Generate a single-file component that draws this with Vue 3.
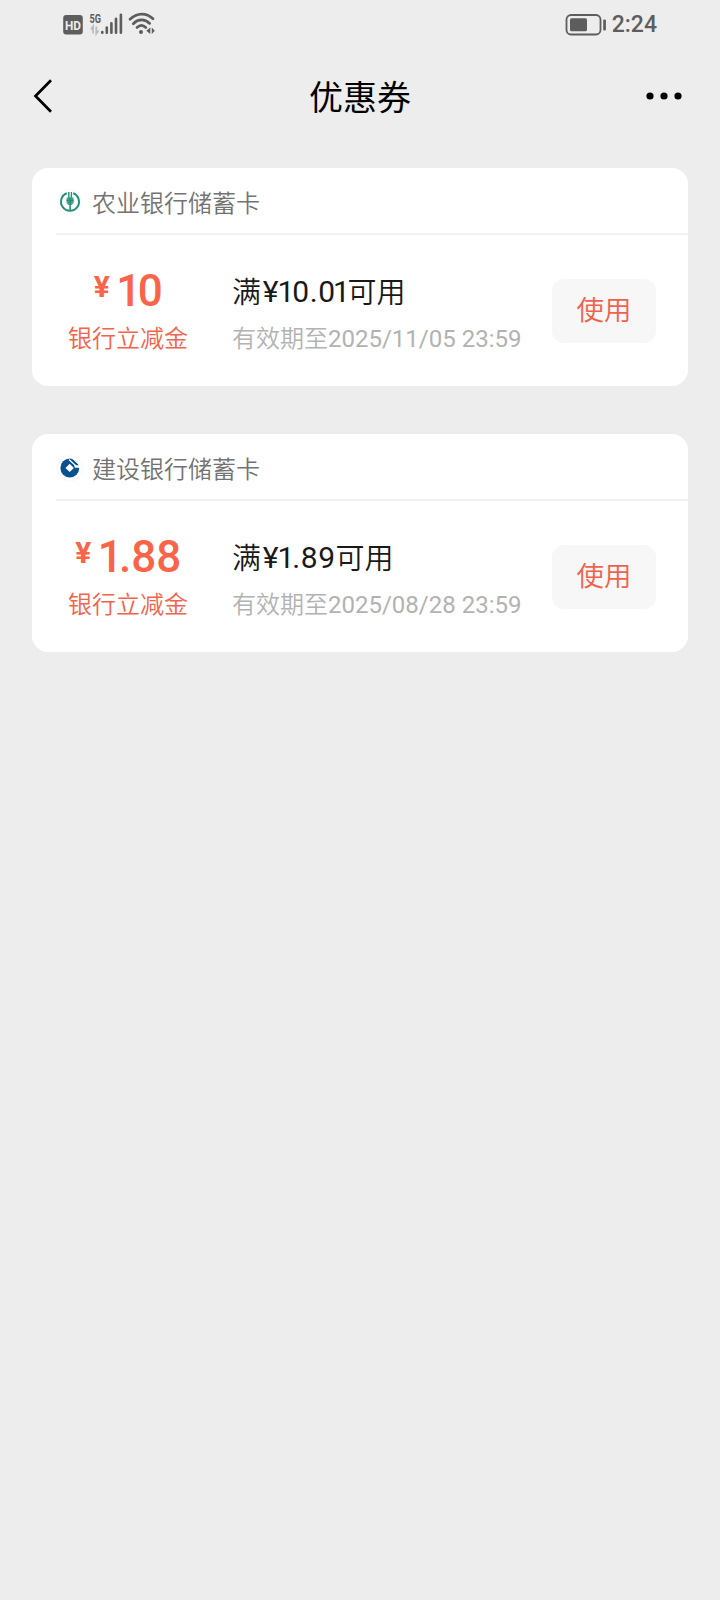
<script setup>
const glyphWidths = { '¥': 19, 1: 12, '.': 8.5 }
const glyphWidth = (ch) => (glyphWidths[ch] ?? 17.5) + 'px'

const coupons = [
  {
    bank: '农业银行储蓄卡',
    logo: 'abc',
    amount: '10',
    pre: '满',
    limit: '¥10.01',
    post: '可用',
    expiry: '2025/11/05 23:59',
  },
  {
    bank: '建设银行储蓄卡',
    logo: 'ccb',
    amount: '1.88',
    pre: '满',
    limit: '¥1.89',
    post: '可用',
    expiry: '2025/08/28 23:59',
  },
]
</script>

<template>
  <div class="page">
    <div class="status">
      <svg class="left-icons" width="96" height="26" viewBox="0 0 96 26">
        <rect x="0.2" y="3" width="19.600" height="19.500" rx="3" fill="#5d5d5d" />
        <text x="2" y="17.500" class="hd" textLength="16" lengthAdjust="spacingAndGlyphs">HD</text>
        <text x="26.500" y="10.500" class="fiveg" textLength="11.500" lengthAdjust="spacingAndGlyphs">5G</text>
        <path d="M30 21.500V14.500L28 17.500M33.300 14.500v7l2.300-3" fill="none" stroke="#bbb" stroke-width="1.800" />
        <g stroke="#5d5d5d" stroke-width="2.600" stroke-linecap="round">
          <path d="M39.300 20v.8M43.800 15.500v5.300M48.400 11.300v9.500M53 6.800v14M57.900 2.800v18" />
        </g>
        <g fill="none" stroke="#5d5d5d" stroke-width="2.700" stroke-linecap="round">
          <path d="M67 7.200C74 .4 83.500 .4 90 6.800" />
          <path d="M70.300 11.700c5-5 11.400-5 16.400-.3" />
          <path d="M74 15.500c2.800-2.700 6-2.700 8.800 0" />
        </g>
        <circle cx="78" cy="20" r="2" fill="#5d5d5d" />
        <path d="M87.300 15.500v6.500l-4-3.200zM88.800 15.500v6.500l3-3.200z" fill="#5d5d5d" />
      </svg>
      <div class="right-icons">
        <svg width="42" height="24" viewBox="0 0 42 24">
          <rect x="1.500" y="2" width="34" height="19.500" rx="4.500" fill="none" stroke="#5d5d5d" stroke-width="1.800" />
          <rect x="5" y="5.200" width="17" height="13" rx="1.500" fill="#5d5d5d" />
          <rect x="38.200" y="6.500" width="2.700" height="11" rx="1" fill="#5d5d5d" />
        </svg>
        <span class="time">2:24</span>
      </div>
    </div>

    <header class="nav">
      <svg width="22" height="36" viewBox="0 0 22 36">
        <path d="M19 2.300L3.500 18 19 33.700" fill="none" stroke="#000" stroke-width="2.700" />
      </svg>
      <h1>优惠券</h1>
      <svg width="38" height="10" viewBox="0 0 38 10">
        <circle cx="5" cy="5" r="3.600" /><circle cx="19" cy="5" r="3.600" /><circle cx="33" cy="5" r="3.600" />
      </svg>
    </header>

    <main>
      <section v-for="c in coupons" :key="c.logo" class="card">
        <div class="bank">
          <svg v-if="c.logo === 'abc'" width="28" height="28" viewBox="0 0 28 28">
            <circle cx="14" cy="14.300" r="12.700" fill="#fff" stroke="#f8f8f8" />
            <path d="M10.800 5.300A9 9 0 1 0 17.200 5.300" fill="none" stroke="#259078" stroke-width="2" />
            <path d="M12.800 4v6M15.400 4v6" stroke="#259078" stroke-width="1.400" />
            <path d="M10.600 9.500h7v5.500l-1.800 2h-3.400l-1.800-2z" fill="#4aa590" />
            <path d="M14.100 9.500v13M10.600 12.500h7" stroke="#259078" stroke-width="1.600" />
          </svg>
          <svg v-else width="28" height="28" viewBox="0 0 28 28">
            <circle cx="14" cy="14.300" r="12.700" fill="#fff" stroke="#f8f8f8" />
            <circle cx="13.800" cy="14" r="9.400" fill="#08508f" />
            <path d="M13.700 9.700l4.200 4.200-4.200 4.200-4.200-4.200zM18 11.300h6v2.500h-5z" fill="#fff" />
            <path d="M13 5.500l7 6.500M16 3.800l7.500 7" stroke="#fff" stroke-width="1.200" />
          </svg>
          <span>{{ c.bank }}</span>
        </div>
        <div class="body">
          <div class="value">
            <div class="amount">
              <span class="yen">¥</span>
              <span v-for="(d, i) in c.amount" :key="i" class="digit" :class="{ one: d === '1' }">{{ d }}</span>
            </div>
            <div class="kind">银行立减金</div>
          </div>
          <div class="info">
            <div class="rule">
              <span>{{ c.pre }}</span>
              <span v-for="(ch, i) in c.limit" :key="i" class="limit" :style="{ width: glyphWidth(ch) }">{{ ch }}</span>
              <span>{{ c.post }}</span>
            </div>
            <div class="expiry">有效期至<span>{{ c.expiry }}</span></div>
          </div>
          <button class="use">使用</button>
        </div>
      </section>
    </main>
  </div>
</template>

<style>
body {
  background: #ededed;
}
</style>

<style scoped>
.page {
  min-height: 1600px;
  background: #ededed;
  font-family: "Noto Sans CJK SC", sans-serif;
  overflow: hidden;
}
.status {
  height: 48px;
  padding: 2px 63px 0;
  box-sizing: border-box;
  display: flex;
  align-items: center;
  justify-content: space-between;
}
.hd {
  font: 700 13px "Roboto", sans-serif;
  fill: #ededed;
}
.fiveg {
  font: 700 12px "Roboto", sans-serif;
  fill: #5d5d5d;
}
.right-icons {
  display: flex;
  align-items: center;
  gap: 5px;
}
.time {
  font: 500 23px/28px "Roboto", sans-serif;
  color: #5d5d5d;
}
.nav {
  height: 96px;
  padding: 0 37px 0 32px;
  display: flex;
  align-items: center;
  justify-content: space-between;
}
.nav h1 {
  margin: 0 0 1px 21px;
  font-size: 34px;
  line-height: 48px;
  font-weight: 400;
  color: #000;
}
main {
  padding: 24px 32px;
  display: flex;
  flex-direction: column;
  gap: 48px;
}
.card {
  height: 218px;
  border-radius: 16px;
  background: #fff;
}
.bank {
  height: 65px;
  margin-left: 24px;
  border-bottom: 2px solid #f1f1f1;
  display: flex;
  align-items: center;
  gap: 8px;
  font-size: 24px;
  color: #737373;
}
.bank svg {
  display: block;
  margin-top: 3px;
}
.bank span {
  line-height: 36px;
  margin-top: 2px;
  font-weight: 350;
}
.body {
  height: 151px;
  padding: 0 32px 0 24px;
  display: flex;
}
.value {
  width: 144px;
  padding-top: 30px;
  text-align: center;
  color: #fa6449;
}
.amount {
  height: 52px;
  display: flex;
  justify-content: center;
  font: 500 44px/52px "Roboto", sans-serif;
}
.yen {
  margin: -4px 7px 0 0;
  font-size: 30px;
  font-weight: 700;
  width: 17px;
  display: flex;
  justify-content: center;
}
.one {
  margin-left: -1px;
  letter-spacing: -3.700px;
}
.kind {
  font-size: 24px;
  line-height: 36px;
  margin-top: 2px;
  font-weight: 350;
  color: #f2634b;
}
.info {
  flex: 1;
  padding: 33px 0 0 32px;
  white-space: nowrap;
}
.rule {
  display: flex;
  font-size: 29px;
  line-height: 44px;
  color: #191919;
  font-weight: 350;
}
.limit {
  display: flex;
  justify-content: center;
  margin-top: 2px;
  height: 42px;
  font-family: "Roboto", sans-serif;
  font-weight: 400;
  font-size: 30px;
}
.expiry {
  margin-top: 7px;
  font-size: 24px;
  line-height: 36px;
  color: #b2b2b2;
  font-weight: 350;
}
.expiry span {
  font-family: "Roboto", sans-serif;
  font-weight: 400;
}
.use {
  width: 104px;
  height: 64px;
  margin-top: 44px;
  padding: 0 0 6px;
  border: 0;
  border-radius: 12px;
  background: #f7f7f7;
  font-family: inherit;
  font-size: 27.5px;
  font-weight: 350;
  color: #f0624b;
}
</style>
